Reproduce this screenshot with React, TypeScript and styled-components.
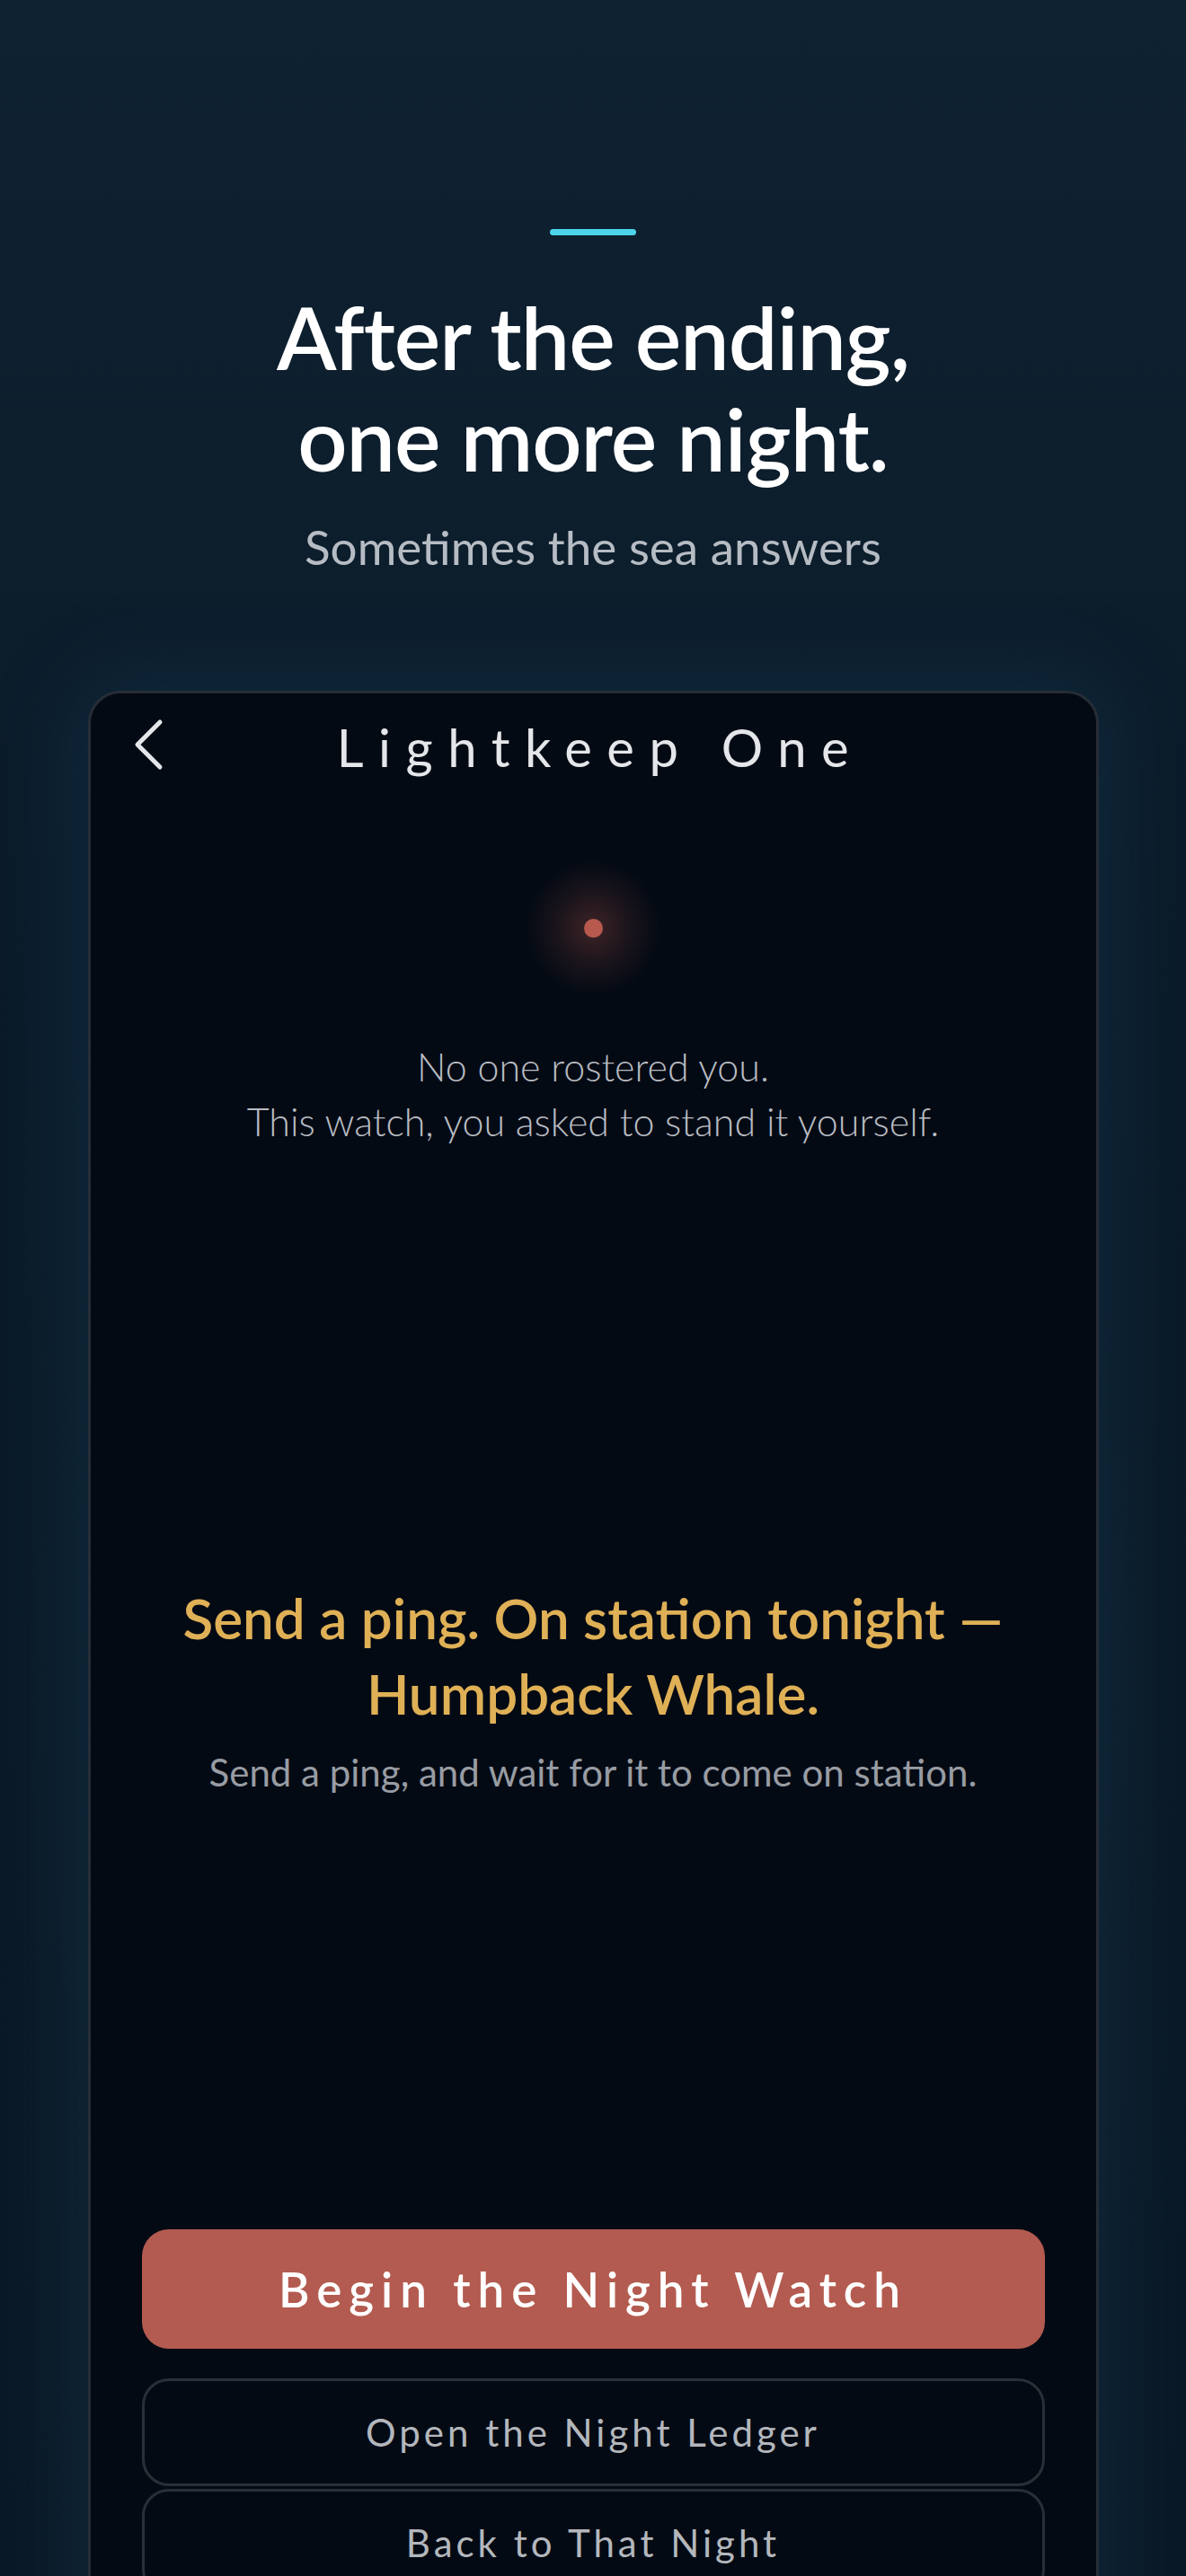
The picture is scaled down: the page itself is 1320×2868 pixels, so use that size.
import styled, { createGlobalStyle } from 'styled-components';

const GlobalStyle = createGlobalStyle`
  html, body {
    margin: 0;
    padding: 0;
    background: #0b1b29;
    overflow: hidden;
  }
  * {
    box-sizing: border-box;
  }
`;

const font = `Lato, "Noto Sans", sans-serif`;

const Page = styled.div`
  min-height: 100vh;
  display: flex;
  flex-direction: column;
  align-items: center;
  font-family: ${font};
  background:
    radial-gradient(ellipse 900px 1400px at 50% 1900px, rgba(20, 52, 72, 0.55), rgba(20, 52, 72, 0) 70%),
    linear-gradient(180deg, #0f2231 0%, #0b1b2a 30%, #0b1a28 60%, #0a1826 100%);
`;

const Hero = styled.header`
  display: flex;
  flex-direction: column;
  align-items: center;
  padding-top: 255px;
`;

const Accent = styled.div`
  width: 96px;
  height: 7px;
  border-radius: 4px;
  background: #4dd3ea;
`;

const Title = styled.h1`
  margin: 56px 0 0;
  font-size: 97px;
  line-height: 113px;
  font-weight: 600;
  color: #ffffff;
  text-align: center;
  letter-spacing: -1px;
`;

const Subtitle = styled.p`
  margin: 28px 0 0;
  font-size: 53px;
  line-height: 74px;
  font-weight: 400;
  color: #b6bcc3;
`;

const Phone = styled.section`
  margin-top: 123px;
  width: 1125px;
  height: 2436px;
  flex-shrink: 0;
  background: #040a14;
  border: 3px solid #262d36;
  border-radius: 36px;
  box-shadow: 0 0 90px 10px rgba(22, 62, 84, 0.45);
  display: flex;
  flex-direction: column;
  align-items: center;
  padding: 0 57px;
`;

const TopBar = styled.div`
  width: 100%;
  height: 114px;
  display: grid;
  grid-template-columns: 80px 1fr 80px;
  align-items: center;
`;

const BackButton = styled.button`
  background: none;
  border: 0;
  padding: 0;
  margin-left: -12px;
  display: flex;
  align-items: center;
  color: #e4e6e9;
  cursor: pointer;
`;

const StationName = styled.div`
  text-align: center;
  font-size: 58px;
  font-weight: 400;
  letter-spacing: 16.5px;
  padding-left: 16px;
  padding-top: 4px;
  color: #e4e6e9;
`;

const Beacon = styled.div`
  margin-top: 72px;
  width: 150px;
  height: 150px;
  border-radius: 50%;
  display: flex;
  align-items: center;
  justify-content: center;
  background: radial-gradient(circle, rgba(180, 88, 76, 0.32) 0%, rgba(180, 88, 76, 0.12) 40%, rgba(180, 88, 76, 0) 70%);
`;

const BeaconDot = styled.div`
  width: 21px;
  height: 21px;
  border-radius: 50%;
  background: #b8594d;
`;

const Note = styled.p`
  margin: 49px 0 0;
  font-size: 43px;
  line-height: 61px;
  font-weight: 300;
  color: #b8bcc2;
  text-align: center;
`;

const Calling = styled.h2`
  margin: 480px 0 0;
  font-size: 62px;
  line-height: 84px;
  font-weight: 600;
  color: #dfb056;
  text-align: center;
`;

const Hint = styled.p`
  margin: 16px 0 0;
  font-size: 42px;
  line-height: 61px;
  font-weight: 400;
  color: #989ca3;
  text-align: center;
`;

const Actions = styled.div`
  margin-top: 478px;
  width: 100%;
  display: flex;
  flex-direction: column;
`;

const PrimaryButton = styled.button`
  height: 133px;
  width: 100%;
  border: 0;
  border-radius: 30px;
  background: #b35b50;
  color: #ffffff;
  font-family: ${font};
  font-size: 53px;
  font-weight: 600;
  letter-spacing: 8px;
  cursor: pointer;
`;

const GhostButton = styled.button<{ $first?: boolean }>`
  height: 120px;
  width: 100%;
  margin-top: ${({ $first }) => ($first ? 33 : 3)}px;
  background: transparent;
  border: 3px solid #2a2f37;
  border-radius: 30px;
  color: #b3b7bc;
  font-family: ${font};
  font-size: 42px;
  font-weight: 400;
  letter-spacing: 4px;
  cursor: pointer;
`;

const ChevronLeft = () => (
  <svg width="40" height="60" viewBox="0 0 40 60" fill="none">
    <polyline
      points="32,5 7,30 32,55"
      stroke="currentColor"
      strokeWidth="5"
      strokeLinecap="round"
      strokeLinejoin="round"
    />
  </svg>
);

export default function App() {
  return (
    <>
      <GlobalStyle />
      <Page>
        <Hero>
          <Accent />
          <Title>
            After the ending,
            <br />
            one more night.
          </Title>
          <Subtitle>Sometimes the sea answers</Subtitle>
        </Hero>
        <Phone>
          <TopBar>
            <BackButton aria-label="Back">
              <ChevronLeft />
            </BackButton>
            <StationName>Lightkeep One</StationName>
            <div />
          </TopBar>
          <Beacon>
            <BeaconDot />
          </Beacon>
          <Note>
            No one rostered you.
            <br />
            This watch, you asked to stand it yourself.
          </Note>
          <Calling>
            Send a ping. On station tonight —
            <br />
            Humpback Whale.
          </Calling>
          <Hint>Send a ping, and wait for it to come on station.</Hint>
          <Actions>
            <PrimaryButton>Begin the Night Watch</PrimaryButton>
            <GhostButton $first>Open the Night Ledger</GhostButton>
            <GhostButton>Back to That Night</GhostButton>
          </Actions>
        </Phone>
      </Page>
    </>
  );
}
